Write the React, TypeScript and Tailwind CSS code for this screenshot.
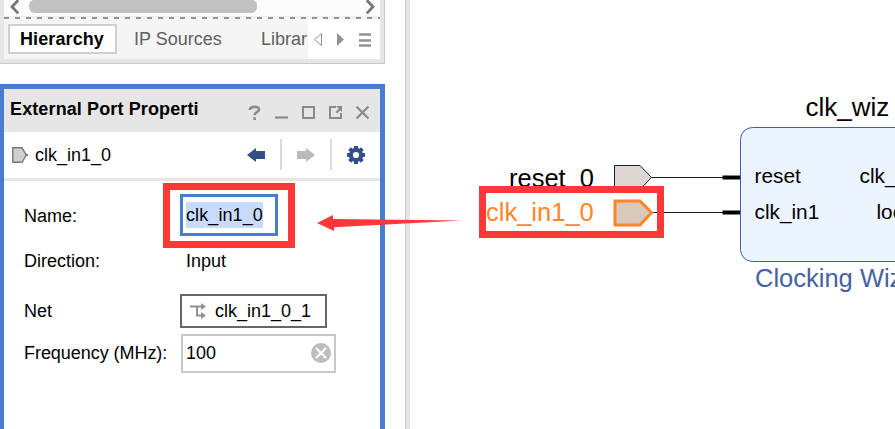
import type { ReactNode } from "react";

const dashes = Array.from({ length: 35 }, (_, i) => i);

function HierarchyPanel() {
  return (
    <section className="h-16 w-[385px] border-r border-b border-[#c9c9c9] bg-[#e6e6e6] pr-1 pl-1">
      <div className="h-[59px] overflow-hidden bg-[#f5f5f5]">
        <div className="flex h-[15.5px] items-start justify-between bg-[#fcfcfc] pr-[5px] pl-[6px]">
          <svg width="10" height="15" viewBox="0 0 10 15" fill="none" stroke="#777" strokeWidth="2.8">
            <path d="M8.2 0.2 L2 6.8 L8.2 13.4" />
          </svg>
          <div className="mr-auto ml-[9px] h-[12.5px] w-[228px] rounded-b-[6px] rounded-t-[5px] bg-[#c1c1c1]" />
          <svg width="10" height="15" viewBox="0 0 10 15" fill="none" stroke="#777" strokeWidth="2.8">
            <path d="M1.8 0.2 L8 6.8 L1.8 13.4" />
          </svg>
        </div>
        <div className="h-[1.5px] bg-[#ededed]" />
        <div className="flex h-[2px] gap-[6px] overflow-hidden bg-[#f3f3f3]">
          {dashes.map((i) => (
            <span key={i} className="h-[2px] w-[5px] shrink-0 bg-[#929292]" />
          ))}
        </div>
        <div className="flex h-10">
          <div className="flex w-[304px] shrink-0 items-start pt-[5px] pl-1 text-lg leading-[26px] whitespace-nowrap text-[#606060]">
            <span className="h-[30px] w-[109px] shrink-0 border-2 border-[#d0d0d0] bg-white pl-[10px] font-bold tracking-[0.1px] text-black">Hierarchy</span>
            <span className="w-[144px] shrink-0 pt-[2px] pl-[17px]">IP Sources</span>
            <span className="pt-[2px]">Librar</span>
          </div>
          <div className="flex grow items-center bg-white pl-[5px]">
            <svg width="60" height="40" viewBox="0 0 60 40">
              <path d="M8.5 14.5 V26.5 L1.5 20.5Z" fill="none" stroke="#929292" />
              <path d="M24 14 L31 20.5 L24 27Z" fill="#929292" />
              <path d="M46 15.5H58M46 21.5H58M46 26.5H58" stroke="#929292" strokeWidth="2.4" />
            </svg>
          </div>
        </div>
      </div>
    </section>
  );
}

function Row({ label, className, children }: { label: string; className: string; children: ReactNode }) {
  return (
    <div className={`flex items-center ${className}`}>
      <span className="w-[156px] shrink-0 whitespace-nowrap">{label}</span>
      {children}
    </div>
  );
}

function PropertiesPanel() {
  return (
    <section className="mt-5 h-[345px] w-[385px] border-t-[5px] border-r-[5px] border-l-4 border-[#4a7ccf] bg-white text-lg leading-[26px] text-black">
      <header className="flex h-[43px] items-start bg-[#e6e6e6] pt-[7px] pl-[6px]">
        <h1 className="w-[235px] font-bold whitespace-nowrap tracking-[0.12px]">External Port Properti</h1>
        <div className="flex h-[30px] items-center">
          <svg width="130" height="30" viewBox="245 96 130 30" fill="none" stroke="#8a8a8a" strokeWidth="2">
            <path d="M249.8 110 C250 106 259 105.8 259 109.4 C259 112 254.8 112 254.6 115.2 M254.6 117.2 V120" strokeWidth="2.6" />
            <path d="M275 117.5H288" strokeWidth="2.2" />
            <path d="M303 107H314V118H303Z" />
            <path d="M336 107H330V118H341V113 M336.3 112.8 L340 109" />
            <path d="M336 106H342V112Z" fill="#8a8a8a" stroke="none" />
            <path d="M356.5 106.5 L368.5 118.5 M368.5 106.5 L356.5 118.5" strokeWidth="2.2" />
          </svg>
        </div>
      </header>
      <div className="flex h-[49px] items-start border-b-[3px] border-[#e6e6e6] pl-2">
        <svg className="mt-[14px]" width="16" height="18" viewBox="0 0 16 18">
          <path d="M0.8 1.7 H10 L14.3 9 L10 16.3 H0.8Z" fill="#d0d0d0" stroke="#777" strokeWidth="1.4" />
          <path d="M13.5 9H16" stroke="#777" strokeWidth="2" />
        </svg>
        <span className="mt-[10px] ml-[7px] w-[206px]">clk_in1_0</span>
        <svg width="130" height="46" viewBox="241 132 130 46">
          <path d="M247 155 L256 148 V151H265V159H256V162Z" fill="#305087" />
          <path d="M281 139V170M331 139V170" stroke="#dadada" strokeWidth="2" />
          <path d="M315 155 L306 148 V151H297V159H306V162Z" fill="#bababa" />
          <g transform="translate(356 155)">
            <g fill="#305087">
              <rect x="-2" y="-9" width="4" height="18" />
              <rect x="-2" y="-9" width="4" height="18" transform="rotate(45)" />
              <rect x="-2" y="-9" width="4" height="18" transform="rotate(90)" />
              <rect x="-2" y="-9" width="4" height="18" transform="rotate(135)" />
              <circle r="7.2" />
            </g>
            <circle r="3.1" fill="white" />
          </g>
        </svg>
      </div>
      <div className="pt-[2px] pl-5">
        <Row label="Name:" className="h-[65px] leading-[28px]">
          <div className="-ml-[17px] h-[65px] w-[132px] border-[7px] border-[#fc3838] pt-1 pl-[10px] leading-[26px]">
            <div className="h-[42px] w-[98px] border-[3px] border-[#4a7ccf] pt-[5px] pl-[3px]">
              <span className="block h-[26px] w-[77px] bg-[#c9dcff] tracking-[0.1px]">clk_in1_0</span>
            </div>
          </div>
        </Row>
        <Row label="Direction:" className="h-[26px]">
          <span className="pl-[6px]">Input</span>
        </Row>
        <Row label="Net" className="mt-5 h-[34px]">
          <div className="flex h-[34px] w-[147px] items-center border-2 border-[#666] pl-2">
            <svg width="16" height="16" viewBox="0 0 16 16" fill="none" stroke="#929292" strokeWidth="2">
              <path d="M0 3.5H12M7 4V12.5H12" />
              <path d="M11 0 L16 3.5 L11 7ZM11 9 L16 12.5 L11 16Z" fill="#929292" stroke="none" />
            </svg>
            <span className="ml-[9px]">clk_in1_0_1</span>
          </div>
        </Row>
        <Row label="Frequency (MHz):" className="mt-[5px] h-10 tracking-[-0.05px]">
          <div className="ml-px flex h-[39px] w-[155px] items-center justify-between border-2 border-[#c8c8c8] pr-[3px] pl-[3px]">
            <span>100</span>
            <svg width="20" height="20" viewBox="0 0 20 20">
              <circle cx="10" cy="10" r="10" fill="#bdbdbd" />
              <path d="M5 5 L15 15 M15 5 L5 15" stroke="white" strokeWidth="2.2" />
            </svg>
          </div>
        </Row>
      </div>
    </section>
  );
}

function Diagram() {
  return (
    <svg className="block" width="485" height="429" viewBox="410 0 485 429">
      <rect x="740.5" y="127.5" width="220" height="134" rx="12" fill="#ecf4ff" stroke="#4060a4" />
      <path d="M651 177.5H723M652 212.5H723" stroke="#10202f" />
      <path d="M722.5 177.5H740M722.5 212.5H740" stroke="black" strokeWidth="4" />
      <path d="M614.5 165.5H640L651.5 177.5L640 189.5H614.5Z" fill="#dfd5d1" stroke="#10203d" />
      <text x="509" y="186.5" fontSize="25.5">reset_0</text>
      <rect x="479" y="186" width="185" height="52" fill="white" />
      <path d="M652 212.5H664" stroke="#10202f" />
      <path d="M615 201H640L651.5 212.5L640 225H615Z" fill="#d8c9bd" stroke="#ff8528" strokeWidth="3" />
      <text x="486" y="221" fontSize="25.5" fill="#ff8528">clk_in1_0</text>
      <rect x="482.5" y="189.5" width="178" height="45" fill="none" stroke="#fc3838" strokeWidth="7" />
      <text x="805.5" y="116" fontSize="26">clk_wiz</text>
      <text x="754.5" y="183" fontSize="20.8">reset</text>
      <text x="754.5" y="219" fontSize="20.8">clk_in1</text>
      <text x="859.5" y="183" fontSize="20.8">clk_</text>
      <text x="876.5" y="219" fontSize="20.8">loc</text>
      <text x="755" y="287" fontSize="25.5" fill="#4463a0">Clocking Wiz</text>
    </svg>
  );
}

export default function App() {
  return (
    <main className="relative flex h-[429px] w-[895px] overflow-hidden bg-white font-['Liberation_Sans',Arial,sans-serif]">
      <div className="w-[405px] shrink-0">
        <HierarchyPanel />
        <PropertiesPanel />
      </div>
      <div className="w-[5px] shrink-0 border-l border-[#c9c9c9] bg-[#e6e6e6]" />
      <Diagram />
      <svg className="absolute top-[214px] left-[316px]" width="150" height="18" viewBox="316 214 150 18">
        <path d="M317 223 L333 215 V219 L462 220.4 L334 227.3 V231Z" fill="#fc3838" />
      </svg>
    </main>
  );
}
